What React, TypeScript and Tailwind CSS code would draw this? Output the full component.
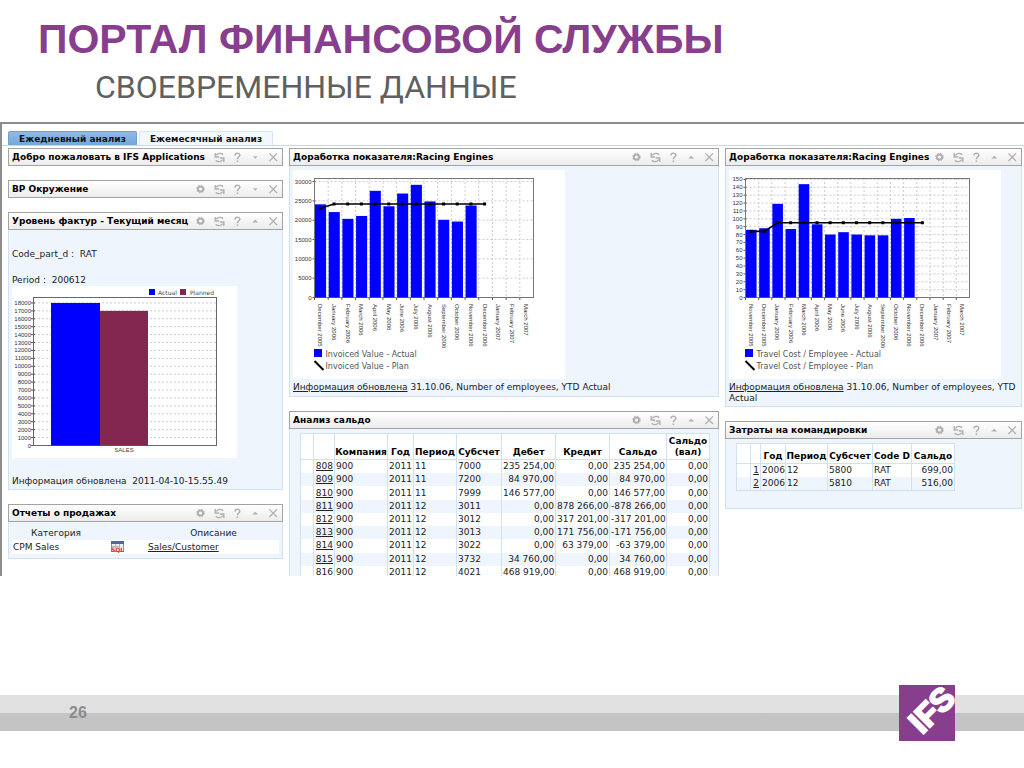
import React from "react";

const MONTHS = [
  "November 2005",
  "December 2005",
  "January 2006",
  "February 2006",
  "March 2006",
  "April 2006",
  "May 2006",
  "June 2006",
  "July 2006",
  "August 2006",
  "September 2006",
  "October 2006",
  "November 2006",
  "December 2006",
  "January 2007",
  "February 2007",
  "March 2007",
];

const INVOICED = [24100, 22100, 20350, 21100, 27600, 23600, 26900, 29150, 24850, 20100, 19650, 23800];
const INVOICED_PLAN = [23100, 24200, 24200, 24200, 24200, 24200, 24200, 24200, 24200, 24200, 24200, 24200, 24200];

const TRAVEL = [86, 88, 119, 87, 144, 93, 80, 83, 80, 79, 79, 100, 101];
const TRAVEL_PLAN = [84, 84, 95, 95, 95, 95, 95, 95, 95, 95, 95, 95, 95, 95];

const BALANCE = [
  ["808", "900", "2011", "11", "7000", "235 254,00", "0,00", "235 254,00", "0,00"],
  ["809", "900", "2011", "11", "7200", "84 970,00", "0,00", "84 970,00", "0,00"],
  ["810", "900", "2011", "11", "7999", "146 577,00", "0,00", "146 577,00", "0,00"],
  ["811", "900", "2011", "12", "3011", "0,00", "878 266,00", "-878 266,00", "0,00"],
  ["812", "900", "2011", "12", "3012", "0,00", "317 201,00", "-317 201,00", "0,00"],
  ["813", "900", "2011", "12", "3013", "0,00", "171 756,00", "-171 756,00", "0,00"],
  ["814", "900", "2011", "12", "3022", "0,00", "63 379,00", "-63 379,00", "0,00"],
  ["815", "900", "2011", "12", "3732", "34 760,00", "0,00", "34 760,00", "0,00"],
  ["816", "900", "2011", "12", "4021", "468 919,00", "0,00", "468 919,00", "0,00"],
];

const TRIPS = [
  ["1", "2006", "12", "5800", "RAT", "699,00"],
  ["2", "2006", "12", "5810", "RAT", "516,00"],
];

function IconButton({ label, children }: { label: string; children: React.ReactNode }) {
  return (
    <button type="button" aria-label={label} className="flex h-4 w-[18px] items-center justify-center">
      <svg width="11" height="11" viewBox="0 0 11 11" fill="none" stroke="#b0b0b0">
        {children}
      </svg>
    </button>
  );
}

function Panel({
  title,
  gear = true,
  open = true,
  children,
}: {
  title: string;
  gear?: boolean;
  open?: boolean;
  children?: React.ReactNode;
}) {
  return (
    <section className="flex flex-col">
      <header className="flex h-[18px] items-center justify-between border border-[#a3a3a3] bg-linear-to-b from-white to-[#ececec] pl-[3px]">
        <h2 className="font-bold whitespace-nowrap text-black">{title}</h2>
        <div className="flex shrink-0">
          {gear && (
            <IconButton label="Настройки">
              <circle cx="4.5" cy="5" r="2.6" strokeWidth="2" />
              <circle cx="4.5" cy="5" r="3.8" strokeWidth="1" strokeDasharray="1.5 1.5" />
            </IconButton>
          )}
          <IconButton label="Обновить">
            <path d="M9.2 2.6C7 0.8 4 1.2 2.2 3.4" strokeWidth="1.4" />
            <path d="M1.2 1v4h4" strokeWidth="1.4" />
            <path d="M1.8 8.4C4 10.2 7 9.8 8.8 7.6" strokeWidth="1.4" />
            <path d="M9.8 10V6H5.8" strokeWidth="1.4" />
          </IconButton>
          <IconButton label="Справка">
            <path d="M3 3.4C3 0.6 7.8 0.6 7.8 3.2C7.8 5 5.4 5 5.4 7.2M5.4 8.4v1.6" strokeWidth="1.5" />
          </IconButton>
          <IconButton label={open ? "Свернуть" : "Развернуть"}>
            <path d={open ? "M2.2 6.5L5.2 3.8L8.2 6.5z" : "M3 4.2H7.6L5.3 6.8z"} fill="#b0b0b0" stroke="none" />
          </IconButton>
          <IconButton label="Закрыть">
            <path d="M1.4 1.4L9 9M9 1.4L1.4 9" strokeWidth="1.3" />
          </IconButton>
        </div>
      </header>
      {children && <div className="border border-t-0 border-[#cfe2f1] bg-[#eff5fc]">{children}</div>}
    </section>
  );
}

function SalesChart() {
  const y = (v: number) => 159.5 - v * 7.92;
  return (
    <svg width="225" height="172" viewBox="0 0 225 172" className="bg-white font-['Liberation_Sans',sans-serif]">
      {Array.from({ length: 19 }, (_, i) => (
        <g key={i}>
          <line x1="22" x2="205" y1={y(i)} y2={y(i)} stroke="#cccccc" strokeDasharray="2 2" />
          <line x1="19" x2="23" y1={y(i)} y2={y(i)} stroke="#555" />
          <text x="19" y={y(i) + 2} fontSize="6" textAnchor="end" fill="#333">
            {i * 1000}
          </text>
        </g>
      ))}
      <rect x="21.5" y="11.5" width="183" height="148" fill="none" stroke="#666" />
      <rect x="39" y={y(18)} width="49" height={18 * 7.92} fill="#0000ff" />
      <rect x="88" y={y(17)} width="48" height={17 * 7.92} fill="#832650" />
      <text x="112" y="166" fontSize="6" textAnchor="middle" fill="#444">
        SALES
      </text>
      <rect x="137" y="3" width="6" height="6" fill="#0000ff" />
      <rect x="168" y="3" width="6" height="6" fill="#832650" />
      <g fontSize="6" fill="#444" className="font-['DejaVu_Sans',sans-serif]">
        <text x="146" y="9">Actual</text>
        <text x="178" y="9">Planned</text>
      </g>
    </svg>
  );
}

type KpiChartProps = {
  left: number;
  right: number;
  labels: string[];
  bars: number[];
  plan: number[];
  step: number;
  ticks: number;
  scale: number;
  name: string;
};

function KpiChart({ left, right, labels, bars, plan, step, ticks, scale, name }: KpiChartProps) {
  const slot = (right - left) / labels.length;
  const y = (v: number) => 127.5 - v * scale;
  const mid = (i: number) => left + slot * (i + 0.5) - 1;
  return (
    <svg width="272" height="209" viewBox="0 0 272 209" className="max-w-full bg-white font-['Liberation_Sans',sans-serif]">
      {Array.from({ length: ticks + 1 }, (_, i) => (
        <g key={i}>
          <line x1={left} x2={right} y1={y(i * step)} y2={y(i * step)} stroke="#cccccc" strokeDasharray="2 2" />
          <line x1={left - 2} x2={left + 1} y1={y(i * step)} y2={y(i * step)} stroke="#555" />
          <text x={left - 3} y={y(i * step) + 2} fontSize="6" textAnchor="end" fill="#333">
            {i * step}
          </text>
        </g>
      ))}
      {labels.map((label, i) => (
        <g key={i}>
          <line x1={left + slot * i} x2={left + slot * i} y1="8" y2="127" stroke="#cccccc" strokeDasharray="2 2" />
          <line x1={left + slot * i} x2={left + slot * i} y1="127" y2="130" stroke="#555" />
          <text transform={`translate(${mid(i) - 2} 134) rotate(90)`} fontSize="6" fill="#333">
            {label}
          </text>
        </g>
      ))}
      <rect x={left} y="8.5" width={right - left} height="119" fill="none" stroke="#777" />
      {bars.map((v, i) => (
        <rect key={i} x={left + slot * i + 0.5} y={y(v)} width={slot - 2.6} height={v * scale} fill="#0000ff" />
      ))}
      <polyline points={plan.map((v, i) => `${mid(i)},${y(v)}`).join(" ")} fill="none" stroke="#000" strokeWidth="1.6" />
      {plan.map((v, i) => (
        <rect key={i} x={mid(i) - 1.5} y={y(v) - 1.5} width="3" height="3" fill="#000" />
      ))}
      <rect x={left - 0.5} y="179" width="8" height="8" fill="#0000ff" />
      <path d={`M${left} 191L${left + 9} 200`} stroke="#000" strokeWidth="2" />
      <g fontSize="8" fill="#555" className="font-['DejaVu_Sans',sans-serif]">
        <text x={left + 11} y="187">{name} - Actual</text>
        <text x={left + 11} y="199">{name} - Plan</text>
      </g>
    </svg>
  );
}

function DataTable({
  widths,
  heads,
  rows,
  numericFrom,
  headClass,
  className,
}: {
  widths: number[];
  heads: string[];
  rows: string[][];
  numericFrom: number;
  headClass: string;
  className: string;
}) {
  return (
    <table className={`table-fixed border-collapse border-b border-[#cfe2f1] bg-white ${className}`}>
      <colgroup>
        {widths.map((w, i) => (
          <col key={i} style={{ width: w }} />
        ))}
      </colgroup>
      <thead>
        <tr className={headClass}>
          <th className="border border-[#cfe2f1] p-0" />
          <th className="border border-[#cfe2f1] p-0" />
          {heads.map((h) => (
            <th key={h} scope="col" className="border border-[#cfe2f1] p-0 pb-px align-bottom leading-[11px] font-bold text-black">
              {h}
            </th>
          ))}
        </tr>
      </thead>
      <tbody>
        {rows.map((row) => (
          <tr key={row[0]} className="even:bg-[#eff5fc]">
            <td className="border-x border-[#cfe2f1] p-0" />
            {row.map((cell, i) => (
              <td
                key={i}
                className={`border-x border-[#cfe2f1] px-px py-0 leading-[13px] whitespace-nowrap ${
                  i === 0 || i >= numericFrom ? "text-right" : "text-left"
                }`}
              >
                {i === 0 ? (
                  <a href="#" className="underline">
                    {cell}
                  </a>
                ) : (
                  cell
                )}
              </td>
            ))}
          </tr>
        ))}
      </tbody>
    </table>
  );
}

function Updated() {
  return (
    <p className="pt-[3px] pb-[2px] leading-[11px]">
      <a href="#" className="underline">
        Информация обновлена
      </a>{" "}
      31.10.06, Number of employees, YTD Actual
    </p>
  );
}

export default function App() {
  return (
    <div className="flex min-h-screen flex-col bg-white font-['Liberation_Sans',Arial,sans-serif]">
      <div className="h-[122px] pt-[16px] pl-[38px]">
        <h1 className="text-[41px] leading-[46px] font-bold whitespace-nowrap text-[#873f8d]">ПОРТАЛ ФИНАНСОВОЙ СЛУЖБЫ</h1>
        <p className="pl-[57px] font-[Roboto,sans-serif] text-[32px] leading-[50px] font-normal whitespace-nowrap text-[#606060]">
          СВОЕВРЕМЕННЫЕ ДАННЫЕ
        </p>
      </div>

      <main className="max-h-[454px] overflow-hidden border-t-2 border-l-2 border-[#8c8c8c] font-['DejaVu_Sans',Verdana,sans-serif] text-[9px] leading-3 text-[#222]">
        <nav className="flex gap-[2px] border-b border-[#c3d9ea] pt-[7px] pl-[6px] font-bold">
          <button
            type="button"
            className="h-[14px] w-[129px] rounded-t-[2px] border border-b-0 border-[#6f9fce] bg-linear-to-b from-[#8fbbe6] to-[#74a7da] whitespace-nowrap text-[#111]"
          >
            Ежедневный анализ
          </button>
          <button
            type="button"
            className="h-[14px] w-[134px] rounded-t-[2px] border border-b-0 border-[#d5e5f3] bg-[#f3f8fd] whitespace-nowrap text-[#111]"
          >
            Ежемесячный анализ
          </button>
        </nav>

        <div className="grid grid-cols-[275fr_430fr_297fr] items-start gap-[6px] pt-[2px] pr-[2px] pl-[6px]">
          <div className="flex min-w-0 flex-col gap-[14px]">
            <Panel title="Добро пожаловать в IFS Applications" gear={false} open={false} />
            <Panel title="ВР Окружение" open={false} />
            <Panel title="Уровень фактур - Текущий месяц">
              <div className="px-[3px] pt-[18px] pb-[2px]">
                <p>Code_part_d :&nbsp; RAT</p>
                <p className="mt-[14px]">Period :&nbsp; 200612</p>
                <SalesChart />
                <p className="mt-[17px]">Информация обновлена&nbsp; 2011-04-10-15.55.49</p>
              </div>
            </Panel>
            <Panel title="Отчеты о продажах">
              <div className="px-[3px] py-[4px]">
                <table className="w-full table-fixed border-collapse">
                  <thead>
                    <tr>
                      <th scope="col" className="h-[14px] w-[88px] p-0 font-normal">
                        Категория
                      </th>
                      <th className="w-[48px] p-0" />
                      <th scope="col" className="p-0 font-normal">
                        Описание
                      </th>
                    </tr>
                  </thead>
                  <tbody>
                    <tr className="bg-white">
                      <td className="h-[14px] p-0 pl-px">CPM Sales</td>
                      <td className="p-0 pl-[11px]">
                        <svg width="13" height="12" viewBox="0 0 13 12">
                          <rect x="0.5" y="0.5" width="12" height="10" fill="#e9eef6" stroke="#8a93a8" />
                          <rect x="0" y="0" width="13" height="3" fill="#53689a" />
                          <path d="M1 5.5h7M4.5 3v4M8.5 3v4" stroke="#a9b4c8" />
                          <text x="6.5" y="11" fontSize="6" fontWeight="bold" textAnchor="middle" fill="#e8302a">
                            SQL
                          </text>
                        </svg>
                      </td>
                      <td className="p-0">
                        <a href="#" className="underline">
                          Sales/Customer
                        </a>
                      </td>
                    </tr>
                  </tbody>
                </table>
              </div>
            </Panel>
          </div>

          <div className="flex min-w-0 flex-col gap-[14px]">
            <Panel title="Доработка показателя:Racing Engines">
              <div className="px-[3px] pt-[4px] pb-px">
                <KpiChart
                  left={21.5}
                  right={240.5}
                  labels={MONTHS.slice(1)}
                  bars={INVOICED}
                  plan={INVOICED_PLAN}
                  step={5000}
                  ticks={6}
                  scale={0.003865}
                  name="Invoiced Value"
                />
                <Updated />
              </div>
            </Panel>
            <Panel title="Анализ сальдо">
              <div className="px-[10px] pt-[4px]">
                <DataTable
                  widths={[13, 21, 53, 26, 43, 45, 54, 54, 57, 43]}
                  heads={["Компания", "Год", "Период", "Субсчет", "Дебет", "Кредит", "Сальдо", "Сальдо (вал)"]}
                  rows={BALANCE}
                  numericFrom={5}
                  headClass="h-[26px]"
                  className="h-[147px] w-full"
                />
              </div>
            </Panel>
          </div>

          <div className="flex min-w-0 flex-col gap-[14px]">
            <Panel title="Доработка показателя:Racing Engines">
              <div className="px-[3px] pt-[4px]">
                <KpiChart
                  left={16.5}
                  right={240.5}
                  labels={MONTHS}
                  bars={TRAVEL}
                  plan={TRAVEL_PLAN}
                  step={10}
                  ticks={15}
                  scale={0.787}
                  name="Travel Cost / Employee"
                />
                <Updated />
              </div>
            </Panel>
            <Panel title="Затраты на командировки">
              <div className="px-[10px] pt-[4px] pb-[17px]">
                <DataTable
                  widths={[14, 10, 25, 42, 45, 39, 43]}
                  heads={["Год", "Период", "Субсчет", "Code D", "Сальдо"]}
                  rows={TRIPS}
                  numericFrom={5}
                  headClass="h-[20px]"
                  className="h-[48px] w-[218px]"
                />
              </div>
            </Panel>
          </div>
        </div>
      </main>

      <footer className="mt-auto mb-[37px] flex h-[36px] items-center justify-between bg-linear-to-b from-[#e1e1e1] from-50% to-[#c4c4c4] to-50% pr-[69px] pl-[69px]">
        <span className="text-[16px] font-bold text-[#8b8b8b]">26</span>
        <svg width="56" height="56" viewBox="0 0 56 56" className="shrink-0" role="img" aria-label="IFS">
          <rect width="56" height="56" fill="#873f8d" />
          <text
            transform="translate(23 50) rotate(-45)"
            fontSize="32"
            fontWeight="bold"
            fill="#fff"
            stroke="#fff"
            strokeWidth="2"
          >
            IFS
          </text>
        </svg>
      </footer>
    </div>
  );
}
